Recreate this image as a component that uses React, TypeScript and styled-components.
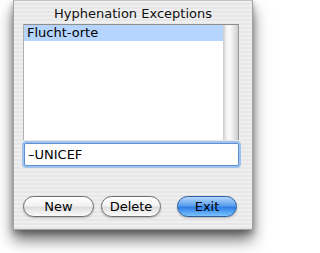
import React from 'react';
import styled, { createGlobalStyle } from 'styled-components';

const GlobalStyle = createGlobalStyle`
  html, body {
    margin: 0;
    padding: 0;
    background: #ffffff;
  }
`;

const Page = styled.div`
  min-height: 253px;
  padding: 0 0 0 13px;
  font-family: 'DejaVu Sans', 'Liberation Sans', sans-serif;
`;

const Window = styled.div`
  width: 238px;
  height: 228px;
  border: 1px solid #a2a2a2;
  border-top: 1px solid #c4c4c4;
  background: repeating-linear-gradient(
    to bottom,
    #efefef 0px,
    #efefef 2px,
    #e7e7e7 2px,
    #e7e7e7 4px
  );
  box-shadow: 0 10px 14px rgba(0, 0, 0, 0.55), 0 3px 6px rgba(0, 0, 0, 0.3);
  display: flex;
  flex-direction: column;
`;

const TitleBar = styled.div`
  height: 23px;
  display: flex;
  align-items: center;
  justify-content: center;
  font-size: 13px;
  color: #111;
  padding-top: 1px;
  box-sizing: border-box;
`;

const Body = styled.div`
  padding: 0 13px 0 9px;
  display: flex;
  flex-direction: column;
`;

const ListArea = styled.div`
  display: flex;
  height: 116px;
  border-top: 1px solid #8d8d8d;
  border-left: 1px solid #b0b0b0;
  box-sizing: border-box;
`;

const List = styled.div`
  flex: 1;
  background: #ffffff;
  display: flex;
  flex-direction: column;
`;

const Row = styled.div<{ selected?: boolean }>`
  height: 16px;
  line-height: 16px;
  padding-left: 3px;
  font-size: 13px;
  color: #000;
  background: ${p => (p.selected ? '#b5d5ff' : 'transparent')};
`;

const Scrollbar = styled.div`
  width: 15px;
  background: linear-gradient(
    to right,
    #c9c9c9 0%,
    #f4f4f4 25%,
    #fafafa 45%,
    #e4e4e4 75%,
    #cdcdcd 100%
  );
  border-right: 1px solid #9a9a9a;
`;

const TextField = styled.div`
  margin: 3px 0 0 1px;
  height: 21px;
  border: 1px solid #5f8fcf;
  border-radius: 2px;
  box-shadow: 0 0 0 2px #9fc3ee;
  background: #fff;
  display: flex;
  align-items: center;
  padding-left: 3px;
  font-size: 13px;
  color: #000;
`;

const ButtonRow = styled.div`
  display: flex;
  align-items: center;
  margin-top: 30px;
`;

const Button = styled.div<{ w: number; primary?: boolean; gap?: number }>`
  width: ${p => p.w}px;
  height: 21px;
  box-sizing: border-box;
  margin-left: ${p => p.gap ?? 0}px;
  border-radius: 11px;
  border: 1px solid ${p => (p.primary ? '#2d5b9e' : '#6f6f6f')};
  background: ${p =>
    p.primary
      ? 'linear-gradient(to bottom, #b5d8fb 0%, #5aa0ee 45%, #2f7fe6 55%, #7cc3ff 100%)'
      : 'linear-gradient(to bottom, #ffffff 0%, #f2f2f2 45%, #dedede 55%, #fbfbfb 100%)'};
  box-shadow: 0 1px 2px rgba(0, 0, 0, 0.25);
  display: flex;
  align-items: center;
  justify-content: center;
  font-size: 13px;
  color: #000;
`;

export default function App() {
  return (
    <>
      <GlobalStyle />
      <Page>
        <Window>
          <TitleBar>Hyphenation Exceptions</TitleBar>
          <Body>
            <ListArea>
              <List>
                <Row selected>Flucht-orte</Row>
              </List>
              <Scrollbar />
            </ListArea>
            <TextField>–UNICEF</TextField>
            <ButtonRow>
              <Button w={71}>New</Button>
              <Button w={60} gap={7}>Delete</Button>
              <Button w={60} gap={16} primary>Exit</Button>
            </ButtonRow>
          </Body>
        </Window>
      </Page>
    </>
  );
}
